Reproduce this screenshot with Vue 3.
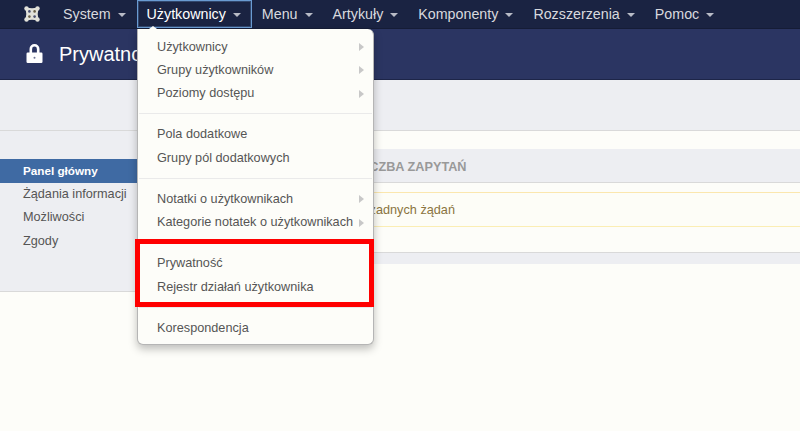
<template>
    <div class="page">
        <nav class="navbar">
            <svg class="logo" viewBox="0 0 16 16">
                <path d="M2.5 2.5Q8 4 13.5 2.5Q12 8 13.5 13.5Q8 12 2.5 13.5Q4 8 2.5 2.5z" fill="#e2e2da" stroke="#e2e2da" stroke-width="1.9"/>
                <circle cx="2.5" cy="2.5" r="2.2" fill="#e2e2da"/>
                <circle cx="13.5" cy="2.5" r="2.2" fill="#e2e2da"/>
                <circle cx="13.5" cy="13.5" r="2.2" fill="#e2e2da"/>
                <circle cx="2.5" cy="13.5" r="2.2" fill="#e2e2da"/>
                <circle cx="5.4" cy="5.4" r="1.3" fill="#4a5070"/>
                <circle cx="10.6" cy="5.4" r="1.3" fill="#6a6048"/>
                <circle cx="5.4" cy="10.6" r="1.3" fill="#6a6048"/>
                <circle cx="10.6" cy="10.6" r="1.3" fill="#4a5070"/>
            </svg>
            <a
                v-for="item in navItems"
                :key="item"
                class="nav_link"
                :class="{ nav_open: item === 'Użytkownicy' }"
            >
                {{ item }}<span class="caret"></span>
            </a>
        </nav>

        <header class="title_bar">
            <svg class="lock" viewBox="0 0 17 20">
                <path d="M3.5 10V6a5 5 0 0 1 10 0v4h-2.6V6a2.4 2.4 0 0 0-4.8 0v4z" fill="#fff"/>
                <rect x="0.5" y="9.5" width="16" height="10.5" rx="1.2" fill="#fff"/>
                <circle cx="8.5" cy="14.8" r="1" fill="#6d7392"/>
            </svg>
            <h1>Prywatność</h1>
        </header>

        <div class="toolbar"></div>

        <div class="body_row">
            <aside class="sidebar">
                <a
                    v-for="(link, i) in sideLinks"
                    :key="link"
                    class="side_link"
                    :class="{ side_active: i === 0 }"
                >{{ link }}</a>
            </aside>
            <main class="content">
                <div class="table_head">Liczba zapytań</div>
                <div class="alert">Brak żadnych żądań</div>
                <div class="table_foot"></div>
            </main>
        </div>

        <div class="dropdown">
            <span class="notch"></span>
            <template v-for="(group, g) in menuGroups" :key="g">
                <div v-if="g > 0" class="divider"></div>
                <a v-for="row in group" :key="row.label" class="menu_item">
                    {{ row.label }}
                    <span v-if="row.sub" class="sub_arrow"></span>
                </a>
            </template>
            <div class="red_frame"></div>
        </div>
    </div>
</template>

<script setup>

const navItems = ['System', 'Użytkownicy', 'Menu', 'Artykuły', 'Komponenty', 'Rozszerzenia', 'Pomoc'];

const sideLinks = ['Panel główny', 'Żądania informacji', 'Możliwości', 'Zgody'];

const menuGroups = [
    [
        { label: 'Użytkownicy', sub: true },
        { label: 'Grupy użytkowników', sub: true },
        { label: 'Poziomy dostępu', sub: true }
    ],
    [
        { label: 'Pola dodatkowe' },
        { label: 'Grupy pól dodatkowych' }
    ],
    [
        { label: 'Notatki o użytkownikach', sub: true },
        { label: 'Kategorie notatek o użytkownikach', sub: true }
    ],
    [
        { label: 'Prywatność' },
        { label: 'Rejestr działań użytkownika' }
    ],
    [
        { label: 'Korespondencja' }
    ]
];

</script>

<style>
html, body {
    margin: 0;
    background: #fdfdf9;
}
</style>

<style scoped>
.page {
    position: relative;
    height: 431px;
    overflow: hidden;
    background: #fdfdf9;
    font-family: "Liberation Sans", Arial, sans-serif;
    font-size: 12.7px;
    color: #555;
}

.navbar {
    display: flex;
    align-items: center;
    height: 28px;
    padding-left: 24px;
    background: #1a2342;
    border-bottom: 1px solid #151c36;
}

.logo {
    width: 16px;
    height: 16px;
    margin-right: 14px;
}

.nav_link {
    display: flex;
    align-items: center;
    height: 28px;
    box-sizing: border-box;
    padding: 0 10px 0 9px;
    margin-right: 1px;
    font-size: 14.27px;
    color: #d8d9de;
}

.nav_open {
    border: 1px solid #6a9bd2;
    box-shadow: inset 0 0 0 1px rgba(106, 155, 210, 0.3);
    color: #fff;
}

.caret {
    width: 0;
    height: 0;
    margin-left: 7px;
    margin-top: 1px;
    border-top: 4px solid #b8bbc6;
    border-left: 4px solid transparent;
    border-right: 4px solid transparent;
}

.title_bar {
    display: flex;
    align-items: center;
    height: 50px;
    padding-left: 26px;
    background: #2b3562;
    border-bottom: 1px solid #1d2548;
}

.title_bar h1 {
    margin: 0 0 0 16px;
    font-size: 20px;
    font-weight: normal;
    color: #fff;
}

.lock {
    width: 17px;
    height: 20px;
    margin-bottom: 2px;
}

.toolbar {
    height: 50px;
    background: #edeef2;
    border-bottom: 1px solid #d9d9d9;
}

.body_row {
    display: flex;
    align-items: flex-start;
}

.sidebar {
    display: flex;
    flex-direction: column;
    width: 137px;
    height: 161px;
    padding-top: 27.5px;
    box-sizing: border-box;
    background: #edeef2;
    border-bottom: 1px solid #d9d9d9;
}

.side_link {
    height: 23.6px;
    line-height: 23.6px;
    padding-left: 23px;
    color: #555;
}

.side_active {
    height: 24px;
    line-height: 24px;
    background: #3f6aa3;
    color: #fff;
    font-size: 11.7px;
    font-weight: bold;
}

.content {
    flex: 1;
    padding-top: 18px;
}

.table_head {
    height: 34px;
    line-height: 36px;
    padding-left: 221px;
    box-sizing: border-box;
    background: #edeef2;
    border-bottom: 1px solid #d9d9d9;
    font-weight: bold;
    text-transform: uppercase;
    color: #999;
}

.alert {
    height: 35px;
    line-height: 34px;
    margin-top: 9px;
    padding-left: 203px;
    box-sizing: border-box;
    background: #fdfdf7;
    border-top: 1px solid #fbe7ae;
    border-bottom: 1px solid #fbeeb4;
    color: #8a7440;
}

.table_foot {
    height: 11px;
    margin-top: 25px;
    background: #edeef2;
    border-top: 1px solid #d9d9d9;
}

.dropdown {
    position: absolute;
    left: 137px;
    top: 29px;
    width: 237px;
    height: 316px;
    padding-top: 6px;
    box-sizing: border-box;
    background: #fdfdf9;
    border: 1px solid #b5b5b5;
    border-top: 0;
    border-radius: 0 6px 6px 6px;
    box-shadow: 0 4px 8px rgba(0, 0, 0, 0.25);
}

.notch {
    position: absolute;
    left: 11px;
    top: -3px;
    width: 0;
    height: 0;
    border-bottom: 3px solid #fdfdf9;
    border-left: 4px solid transparent;
    border-right: 4px solid transparent;
}

.divider {
    height: 1px;
    margin: 8.3px 1px;
    background: #eaeaea;
}

.menu_item {
    display: flex;
    align-items: center;
    height: 23.4px;
    padding-left: 19px;
    color: #555;
    position: relative;
}

.sub_arrow {
    position: absolute;
    left: 221px;
    top: 8px;
    width: 0;
    height: 0;
    border-left: 5px solid #c8c8c8;
    border-top: 4px solid transparent;
    border-bottom: 4px solid transparent;
}

.red_frame {
    position: absolute;
    left: -3.5px;
    top: 209.5px;
    width: 239px;
    height: 68px;
    box-sizing: border-box;
    border: 5px solid #f00;
}
</style>
